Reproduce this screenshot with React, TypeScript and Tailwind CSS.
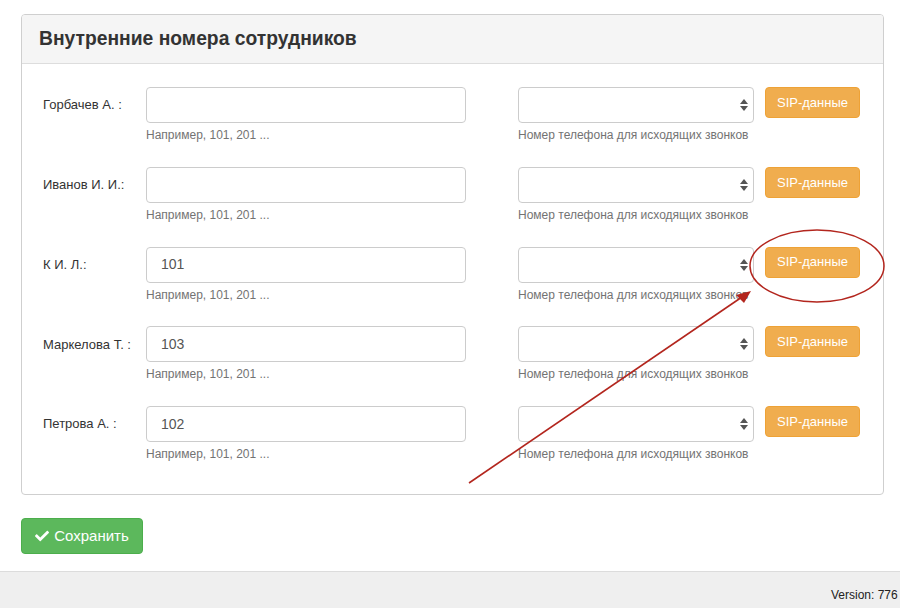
import React from "react";
import { FaCheck } from "react-icons/fa";

const rows = [
  { name: "Горбачев А. :", value: "" },
  { name: "Иванов И. И.:", value: "" },
  { name: "К И. Л.:", value: "101" },
  { name: "Маркелова Т. :", value: "103" },
  { name: "Петрова А. :", value: "102" },
];

function SelectArrows() {
  return (
    <svg width="8" height="12" viewBox="0 0 8 12" className="text-[#555]">
      <path d="M4 0 L8 5 L0 5 Z" fill="currentColor" />
      <path d="M0 7 L8 7 L4 12 Z" fill="currentColor" />
    </svg>
  );
}

export default function App() {
  return (
    <div className="relative w-[900px] h-[608px] bg-white overflow-hidden flex flex-col font-['Liberation_Sans',Arial,sans-serif] text-[#333]">
      <div className="flex-1 pt-[14px] pl-[21px]">
        <div className="w-[863px] border border-[#cfcfcf] rounded-[4px] overflow-hidden">
          <div className="h-[49px] bg-[#f5f5f5] border-b border-[#dddddd] flex items-center pl-[17px]">
            <h1 className="text-[19.3px] font-bold text-[#333] leading-none">Внутренние номера сотрудников</h1>
          </div>
          <div className="pt-[23px] pb-[30px] flex flex-col gap-[21.75px]">
            {rows.map((r) => (
              <div key={r.name} className="flex items-start h-[58px]">
                <div className="w-[124px] pl-[21px] h-[36px] flex items-center text-[13px] text-[#333]">{r.name}</div>
                <div className="w-[320px] flex flex-col">
                  <div className="h-[36px] border border-[#cccccc] rounded-[4px] flex items-center pl-[14px] text-[14px] text-[#555]">
                    {r.value}
                  </div>
                  <div className="mt-[4px] text-[12px] leading-[17px] text-[#737373]">Например, 101, 201 ...</div>
                </div>
                <div className="ml-[52px] w-[236px] flex flex-col">
                  <div className="h-[36px] border border-[#cccccc] rounded-[4px] flex items-center justify-end pr-[5px]">
                    <SelectArrows />
                  </div>
                  <div className="mt-[4px] text-[12px] leading-[17px] text-[#737373] whitespace-nowrap">Номер телефона для исходящих звонков</div>
                </div>
                <button className="ml-[11px] w-[95px] h-[31px] bg-[#f0ad4e] border border-[#eea236] rounded-[4px] text-white text-[13px] flex items-center justify-center">
                  SIP-данные
                </button>
              </div>
            ))}
          </div>
        </div>
        <button className="mt-[23px] w-[122px] h-[36px] bg-[#5cb85c] border border-[#4cae4c] rounded-[4px] text-white text-[15px] flex items-center justify-center gap-[5px]">
          <FaCheck className="w-[14px] h-[14px]" />
          <span>Сохранить</span>
        </button>
      </div>
      <div className="h-[37px] bg-[#efefef] border-t border-[#dcdcdc] flex items-start pt-[16px] pl-[831px] whitespace-nowrap text-[12px] leading-[14px] text-[#222]">
        Version: 776
      </div>
      <svg className="absolute inset-0 pointer-events-none" width="900" height="608" viewBox="0 0 900 608">
        <ellipse cx="817" cy="266" rx="67" ry="36" fill="none" stroke="#b3261e" strokeWidth="1.5" />
        <line x1="469" y1="483" x2="742" y2="297" stroke="#b3261e" strokeWidth="1.6" />
        <path d="M751 291 L736 295 L744 303 Z" fill="#b3261e" />
      </svg>
    </div>
  );
}
